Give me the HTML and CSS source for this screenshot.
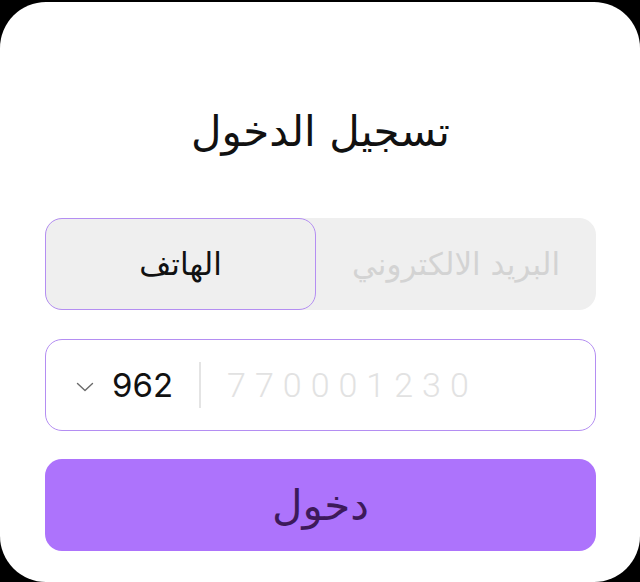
FILE: index.html
```html
<!DOCTYPE html>
<html lang="ar" dir="rtl">
<head>
<meta charset="utf-8">
<title>تسجيل الدخول</title>
<link rel="stylesheet" href="styles.css">
</head>
<body>
<main class="card">
  <h1 class="title">تسجيل الدخول</h1>
  <div class="tabs">
    <button class="tab">البريد الالكتروني</button>
    <button class="tab tab-active">الهاتف</button>
  </div>
  <div class="phone" dir="ltr">
    <div class="code">
      <svg class="chev" width="18" height="10" viewBox="0 0 18 10"><path d="M1.5 1.5 L9 8.5 L16.5 1.5" fill="none" stroke="#6a6a6a" stroke-width="1.4" stroke-linecap="round" stroke-linejoin="round"/></svg>
      <span class="code-num">962</span>
    </div>
    <span class="divider"></span>
    <span class="placeholder">770001230</span>
  </div>
  <button class="submit">دخول</button>
</main>
</body>
</html>
```
FILE: styles.css
```css
html, body {
  margin: 0;
  padding: 0;
  background: #000;
}
.card {
  box-sizing: border-box;
  margin-top: 2px;
  height: 580px;
  background: #fff;
  border-radius: 46px;
  padding: 100px 44px 0 45px;
  display: flex;
  flex-direction: column;
  font-family: "DejaVu Sans", sans-serif;
}
.title {
  margin: 0;
  height: 60px;
  line-height: 60px;
  text-align: center;
  font-weight: normal;
  font-size: 42px;
  color: #111;
}
.tabs {
  margin-top: 56px;
  height: 92px;
  display: flex;
  background: #efefef;
  border-radius: 17px;
}
.tab {
  flex: 1;
  border: none;
  background: transparent;
  font-family: "DejaVu Sans", sans-serif;
  font-size: 31px;
  color: #d3d3d3;
  border-radius: 17px;
  padding: 0;
}
.tab-active {
  flex: 0 0 271px;
  border: 1.5px solid #b48ef2;
  color: #111;
  background: #efefef;
}
.phone {
  margin-top: 29px;
  box-sizing: border-box;
  height: 92px;
  border: 1.5px solid #b48ef2;
  border-radius: 17px;
  display: flex;
  align-items: center;
  padding-left: 30px;
}
.code {
  display: flex;
  align-items: center;
  gap: 18px;
}
.chev {
  margin-top: 4px;
}
.code-num {
  font-family: "Inter", "Roboto", sans-serif;
  font-size: 33px;
  color: #111;
}
.divider {
  width: 2px;
  height: 46px;
  background: #e4e4e4;
  margin: 0 26px 0 26px;
}
.placeholder {
  font-family: "Roboto", sans-serif;
  font-weight: 300;
  font-size: 34px;
  letter-spacing: 9px;
  color: #e2e2e2;
}
.submit {
  margin-top: 28px;
  height: 92px;
  border: none;
  border-radius: 17px;
  background: #ad73fc;
  color: #3d1a5a;
  font-family: "DejaVu Sans", sans-serif;
  font-size: 42px;
  padding: 0;
}
```
